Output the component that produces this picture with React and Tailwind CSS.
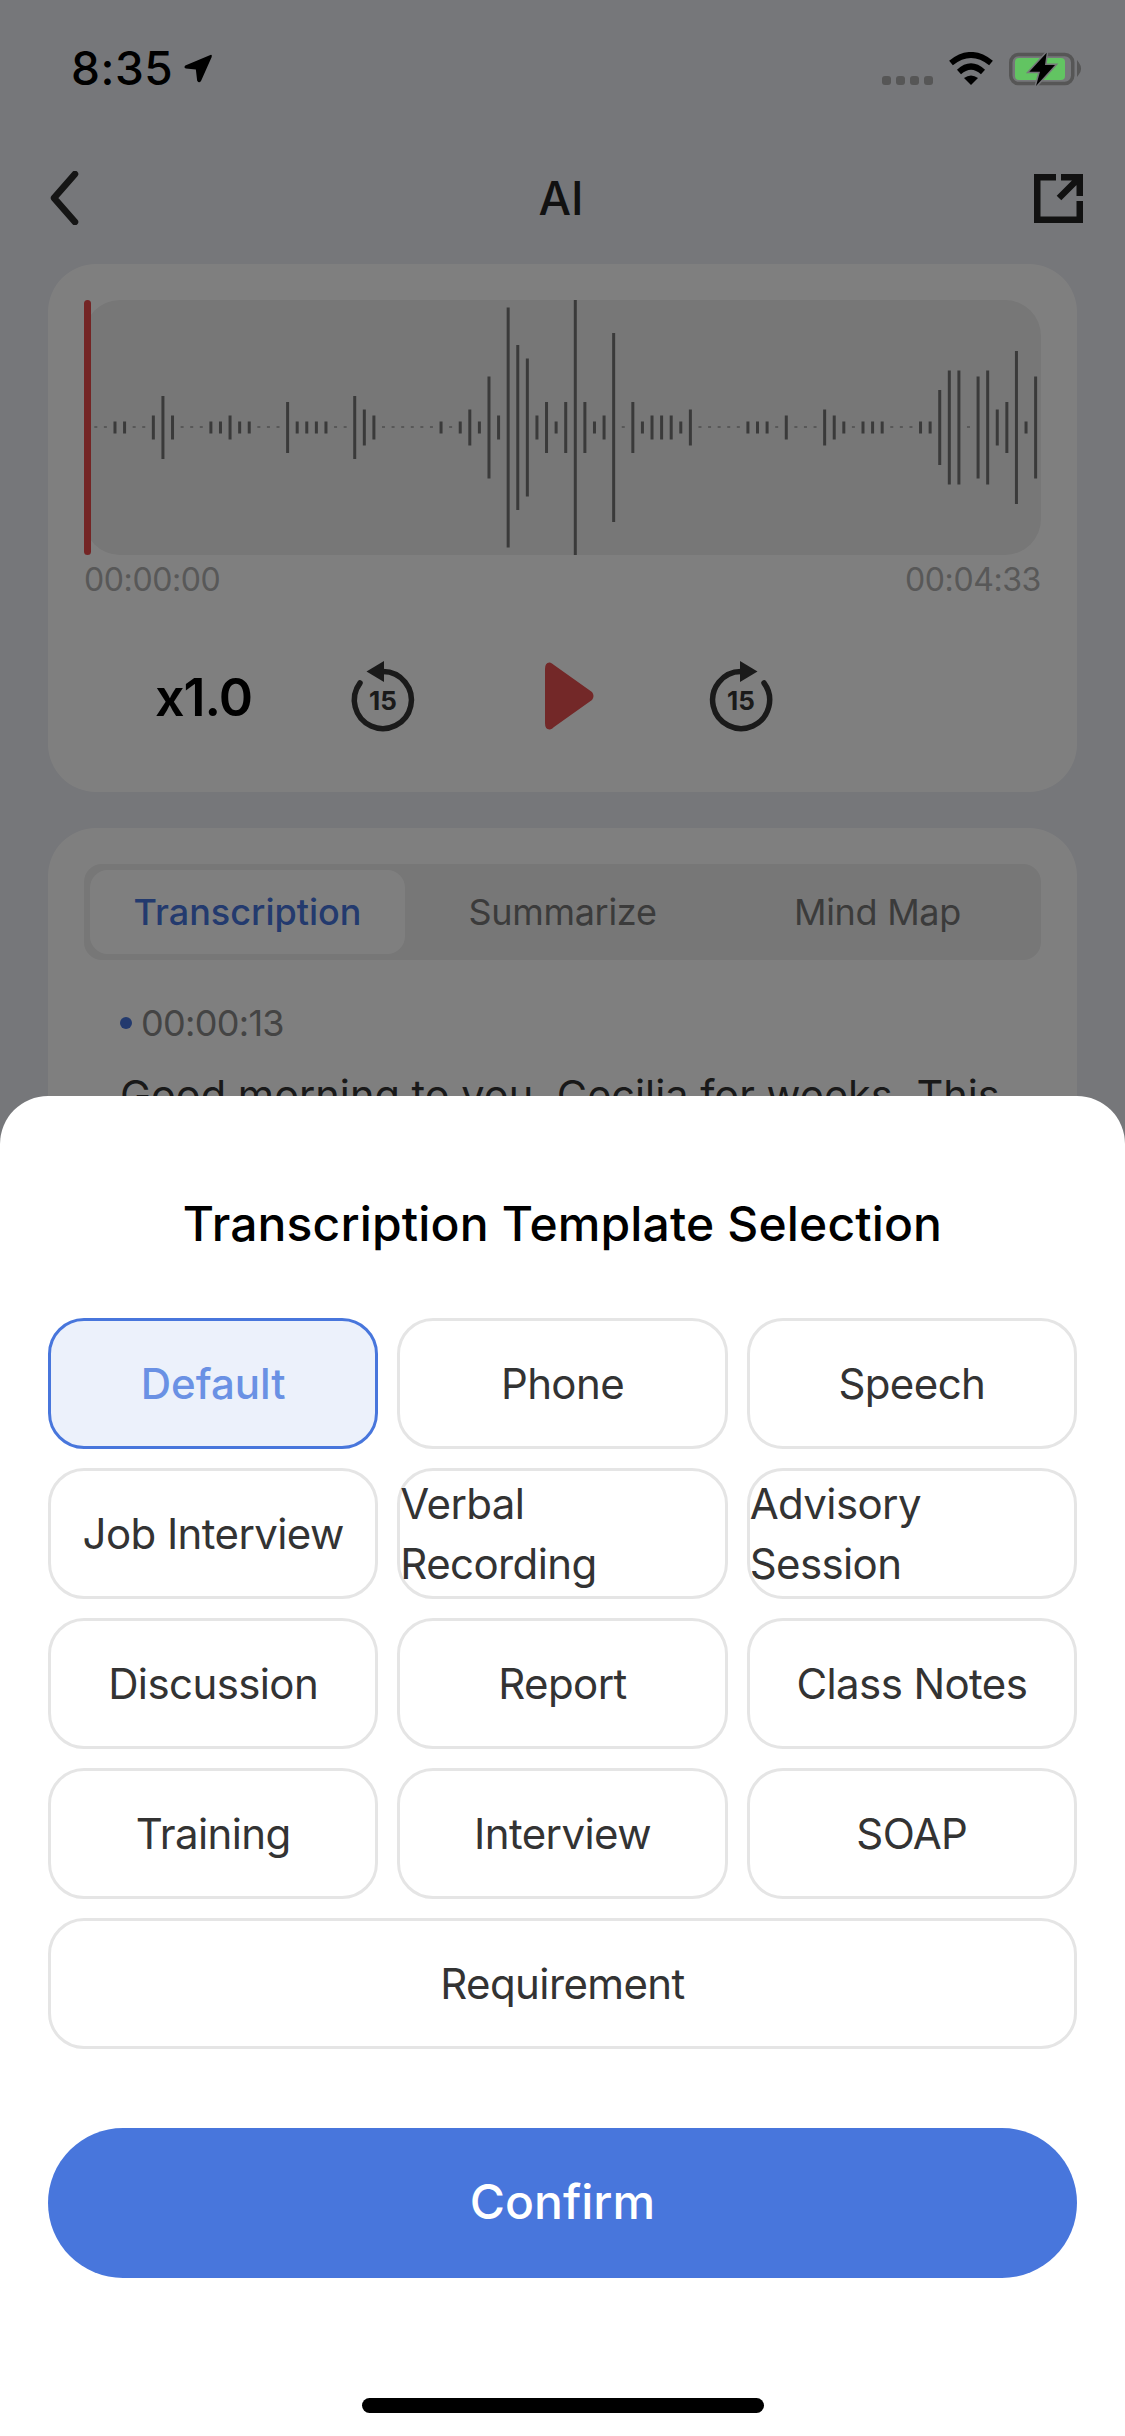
const wave = [
  0, 0, 12, 12, 0, 0, 24, 63, 24, 0, 0, 0, 12, 12, 24, 12, 12, 0, 0, 0, 51, 12, 12, 12, 12, 0, 0, 63, 36, 24,
  0, 0, 0, 0, 0, 0, 12, 0, 12, 36, 12, 102, 24, 240, 165, 138, 24, 51, 12, 51, 255, 51, 12, 24, 189, 0, 51, 12, 24, 24,
  24, 12, 36, 0, 0, 0, 0, 0, 12, 12, 12, 0, 24, 0, 0, 0, 36, 24, 12, 0, 12, 12, 12, 0, 0, 0, 12, 12, 75, 114,
  114, 0, 102, 114, 36, 51, 153, 12, 102,
];

const templates = [
  "Default", "Phone", "Speech",
  "Job Interview", "Verbal Recording", "Advisory Session",
  "Discussion", "Report", "Class Notes",
  "Training", "Interview", "SOAP",
];

function Waveform() {
  return (
    <svg className="block" width="957" height="255" viewBox="0 0 957 255">
      {wave.map((h, i) => {
        const x = 11.8 + i * 9.59;
        if (h === 0) return <rect key={i} x={x - 1.5} y="126.5" width="3" height="1" fill="#747474" />;
        return <rect key={i} x={x - 1.5} y={127.5 - h / 2} width="3" height={h} fill="#747474" />;
      })}
    </svg>
  );
}

function SkipIcon({ forward }) {
  return (
    <svg className="block shrink-0" width="100" height="100" viewBox="0 0 100 100">
      {forward ? (
        <>
          <path d="M66 33A28.5 28.5 0 1 1 43 21.5" fill="none" stroke="#343434" strokeWidth="5.5" strokeLinecap="round" />
          <polygon points="59.5,21.5 42,11 42,32" fill="#343434" />
        </>
      ) : (
        <>
          <path d="M20 33A28.5 28.5 0 1 0 43 21.5" fill="none" stroke="#343434" strokeWidth="5.5" strokeLinecap="round" />
          <polygon points="26.5,21.5 44,11 44,32" fill="#343434" />
        </>
      )}
      <text x="43" y="60" textAnchor="middle" fontSize="26" fontWeight="700" fontFamily="Inter, sans-serif" fill="#343434">15</text>
    </svg>
  );
}

function StatusBar() {
  return (
    <div className="relative z-20 flex h-[132px] items-start justify-between pl-[71px] pr-[40px] pt-[50px]">
      <div className="flex items-start">
        <span className="text-[46px] leading-[36px] font-medium tracking-[0.5px] text-black">8:35</span>
        <svg className="ml-[8px] mt-[2px]" width="33" height="33" viewBox="385 65 100 100">
          <path d="M474 74L398 106Q392 112 400 115L430 118L434 152Q440 162 446 152L478 80Q480 72 474 74Z" fill="#000" />
        </svg>
      </div>
      <div className="flex items-start">
        <div className="mt-[26px] flex gap-[5px]">
          <div className="h-[9px] w-[9px] rounded-[3px] bg-[#565656]"></div>
          <div className="h-[9px] w-[9px] rounded-[3px] bg-[#565656]"></div>
          <div className="h-[9px] w-[9px] rounded-[3px] bg-[#565656]"></div>
          <div className="h-[9px] w-[9px] rounded-[3px] bg-[#565656]"></div>
        </div>
        <svg className="ml-[16px] mt-[2px]" width="44" height="33" viewBox="0 0 44 33">
          <path d="M2 11Q22 -5 42 11" fill="none" stroke="#000" strokeWidth="6" />
          <path d="M10 20Q22 9 34 20" fill="none" stroke="#000" strokeWidth="6" />
          <path d="M22 33L15 26Q22 21 29 26Z" fill="#000" />
        </svg>
        <svg className="ml-[12px]" width="80" height="40" viewBox="0 0 80 40">
          <rect x="5.75" y="4.5" width="62" height="29" rx="8" fill="none" stroke="#565656" strokeWidth="3.5" />
          <rect x="10" y="8" width="50" height="22" rx="4" fill="#62c462" />
          <path d="M73 13Q77 18.5 73 24Z" fill="#565656" stroke="#565656" strokeWidth="2" />
          <path d="M41.7 2.7L24.3 21.7H35L31 36L50 15H40Z" fill="#000" stroke="#76777a" strokeWidth="3" paintOrder="stroke" />
        </svg>
      </div>
    </div>
  );
}

export default function App() {
  return (
    <div className="relative h-[2436px] w-[1125px] overflow-hidden bg-[#eceef4] font-['Inter',sans-serif]">
      <StatusBar />

      <div className="flex h-[132px] items-center justify-between pl-[48px] pr-[42px]">
        <svg width="32" height="54" viewBox="0 0 32 54">
          <path d="M27 3L6 27L27 51" fill="none" stroke="#2a2a2a" strokeWidth="6.5" strokeLinecap="round" strokeLinejoin="round" />
        </svg>
        <span className="ml-[8px] text-[46px] font-medium text-[#222]">AI</span>
        <svg width="49" height="49" viewBox="0 0 49 49">
          <path d="M22 3.25H3.25V45.75H45.75V27M27 3.25H45.75V22M25 24L45 4" fill="none" stroke="#222" strokeWidth="6.5" />
        </svg>
      </div>

      <div className="mx-[48px] rounded-[48px] bg-white px-[36px] pb-[42px] pt-[36px]">
        <div className="relative h-[255px] rounded-[36px] bg-[#eeeeee]">
          <Waveform />
          <div className="absolute left-0 top-0 h-[255px] w-[7px] rounded-full bg-[#e84a4a]"></div>
        </div>
        <div className="flex h-[50px] items-center justify-between text-[32px] tracking-[-0.4px] text-[#b0b0b0]">
          <span>00:00:00</span>
          <span>00:04:33</span>
        </div>
        <div className="mt-[45px] flex h-[100px] items-center pl-[71px]">
          <span className="mb-[5px] w-[96px] text-[52px] font-semibold leading-none tracking-[-1px] text-black">x1.0</span>
          <div className="ml-[89px]"><SkipIcon /></div>
          <svg className="mb-[8px] ml-[105px]" width="50" height="68" viewBox="0 0 50 68">
            <path d="M0 7Q0 0 5 0.5Q7 1 9 3L47 30Q50 34 47 38L9 65Q7 67 5 67.5Q0 68 0 61Z" fill="#e65050" />
          </svg>
          <div className="ml-[103px]"><SkipIcon forward /></div>
        </div>
      </div>

      <div className="mx-[48px] mt-[36px] h-[600px] rounded-[48px] bg-white px-[36px] pt-[36px]">
        <div className="grid h-[96px] grid-cols-3 rounded-[18px] bg-[#eeeeee] p-[6px] text-[36px] tracking-[-0.3px]">
          <div className="flex items-center justify-center rounded-[18px] bg-white font-medium tracking-[0px] text-[#4674dc]">Transcription</div>
          <div className="flex items-center justify-center text-[#777]">Summarize</div>
          <div className="flex items-center justify-center text-[#777]">Mind Map</div>
        </div>
        <div className="ml-[36px] mt-[41px] flex items-center text-[36px] leading-[44px] tracking-[-0.7px] text-[#888]">
          <div className="h-[12px] w-[12px] rounded-full bg-[#4674dc]"></div>
          <span className="ml-[9px]">00:00:13</span>
        </div>
        <p className="ml-[36px] mt-[20px] text-[41.5px] leading-[60px] text-[#333]">Good morning to you. Cecilia for weeks. This</p>
      </div>

      <div className="absolute inset-0 z-10 bg-black/50"></div>

      <div className="absolute inset-x-0 bottom-0 top-[1096px] z-20 rounded-t-[48px] bg-white px-[48px] pt-[99px]">
        <h2 className="text-center text-[48px] font-medium leading-[58px] tracking-[0.15px] text-black">Transcription Template Selection</h2>
        <div className="mt-[65px] grid grid-cols-3 gap-x-[19px] gap-y-[19px] tracking-[-0.6px]">
          {templates.map((t, i) => (
            <div
              key={t}
              className={
                i === 0
                  ? "flex h-[131px] items-center justify-center rounded-[36px] border-[3px] border-[#4876dc] bg-[#ecf1fb] text-[42px] font-medium leading-[60px] tracking-[0px] text-[#6a91e4]"
                  : "flex h-[131px] items-center justify-center rounded-[36px] border-[3px] border-[#e5e5e5] text-[42px] leading-[60px] text-[#333]"
              }
            >
              {t}
            </div>
          ))}
          <div className="col-span-3 flex h-[131px] items-center justify-center rounded-[36px] border-[3px] border-[#e5e5e5] text-[42px] leading-[60px] text-[#333]">Requirement</div>
        </div>
        <div className="mt-[79px] flex h-[150px] items-center justify-center rounded-full bg-[#4876dc] pb-[2px] text-[48px] font-medium text-white">Confirm</div>
        <div className="mx-auto mt-[120px] h-[15px] w-[402px] rounded-full bg-black"></div>
      </div>
    </div>
  );
}
